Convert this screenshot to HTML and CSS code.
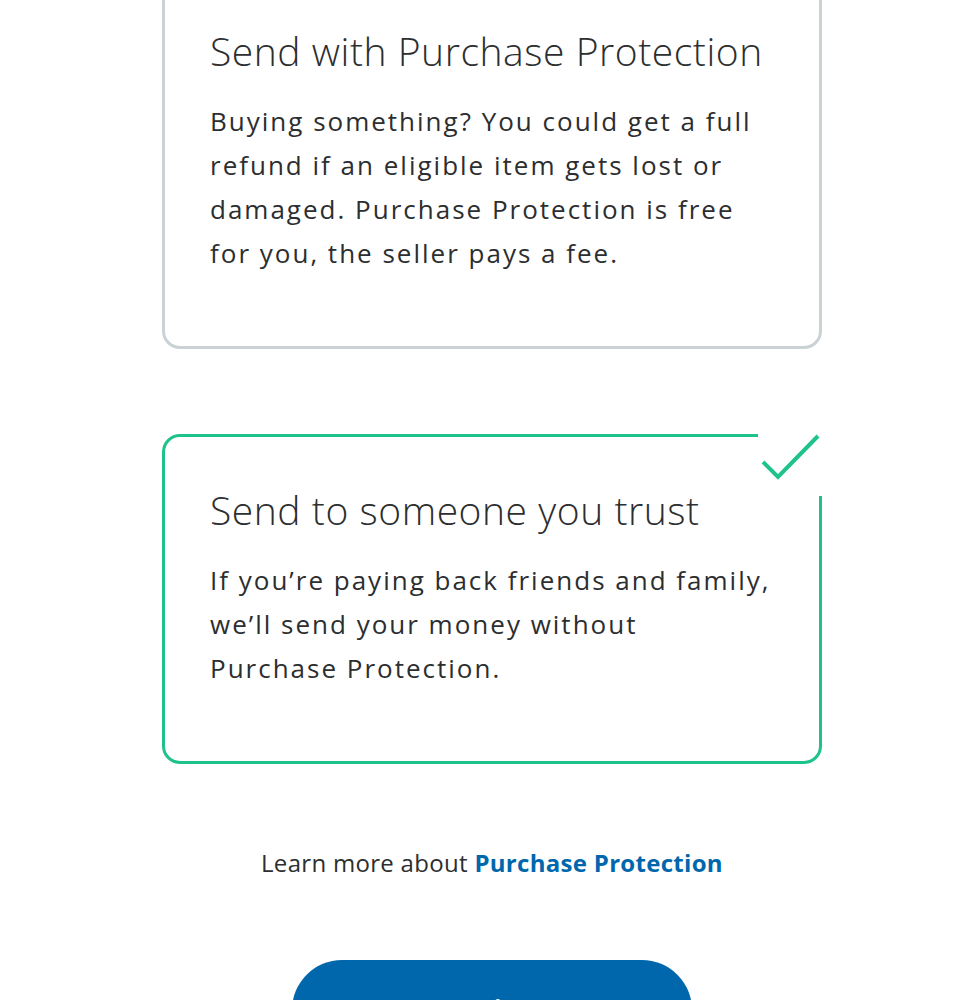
FILE: index.html
```html
<!DOCTYPE html>
<html lang="en">
<head>
<meta charset="utf-8">
<title>Send money</title>
<link rel="stylesheet" href="styles.css">
</head>
<body>
<main class="page">
  <section class="option">
    <h2 class="option-title">Send with Purchase Protection</h2>
    <p class="option-text">Buying something? You could get a full refund if an eligible item gets lost or damaged. Purchase Protection is free for you, the seller pays a fee.</p>
  </section>
  <section class="option option-selected">
    <span class="check">
      <svg width="64" height="62" viewBox="0 0 64 62" aria-hidden="true"><path d="M5 28 L20 43 L60 2" fill="none" stroke="#1ec38b" stroke-width="4"/></svg>
    </span>
    <h2 class="option-title">Send to someone you trust</h2>
    <p class="option-text">If you’re paying back friends and family, we’ll send your money without Purchase&nbsp;Protection.</p>
  </section>
  <p class="learn">Learn more about <a href="#" class="learn-link">Purchase Protection</a></p>
  <button class="primary" type="button">Continue</button>
</main>
</body>
</html>
```
FILE: styles.css
```css
html, body {
  margin: 0;
  padding: 0;
  background: #ffffff;
}
body {
  font-family: "Open Sans", "Liberation Sans", sans-serif;
  color: #2c2e2f;
  overflow: hidden;
}
.page {
  padding-left: 12px;
  margin-top: -25px;
  display: flex;
  flex-direction: column;
  align-items: center;
}
.option {
  position: relative;
  box-sizing: border-box;
  width: 660px;
  border: 3px solid #cbd2d6;
  border-radius: 18px;
  padding: 49px 45px 71px 45px;
  margin-bottom: 85px;
}
.option-selected {
  border-color: #1ec38b;
  margin-bottom: 0;
}
.option-title {
  margin: 0;
  font-weight: 300;
  font-size: 39px;
  line-height: 48px;
  letter-spacing: 0.55px;
}
.option-text {
  margin: 24px 0 0 0;
  font-size: 26px;
  line-height: 44px;
  font-weight: 400;
  letter-spacing: 2px;
}
.check {
  position: absolute;
  top: -3px;
  right: -3px;
  width: 64px;
  height: 62px;
  background: #ffffff;
  display: block;
}
.check svg {
  display: block;
}
.learn {
  margin: 83px 0 0 0;
  font-size: 24px;
  line-height: 32px;
  letter-spacing: 0.3px;
  text-align: center;
}
.learn-link {
  color: #0067ad;
  font-weight: 700;
  text-decoration: none;
}
.primary {
  margin-top: 81px;
  flex: none;
  width: 400px;
  height: 100px;
  border: 0;
  border-radius: 50px;
  background: #0067ad;
  color: #ffffff;
  font-family: inherit;
  font-size: 26px;
  font-weight: 700;
}
```
